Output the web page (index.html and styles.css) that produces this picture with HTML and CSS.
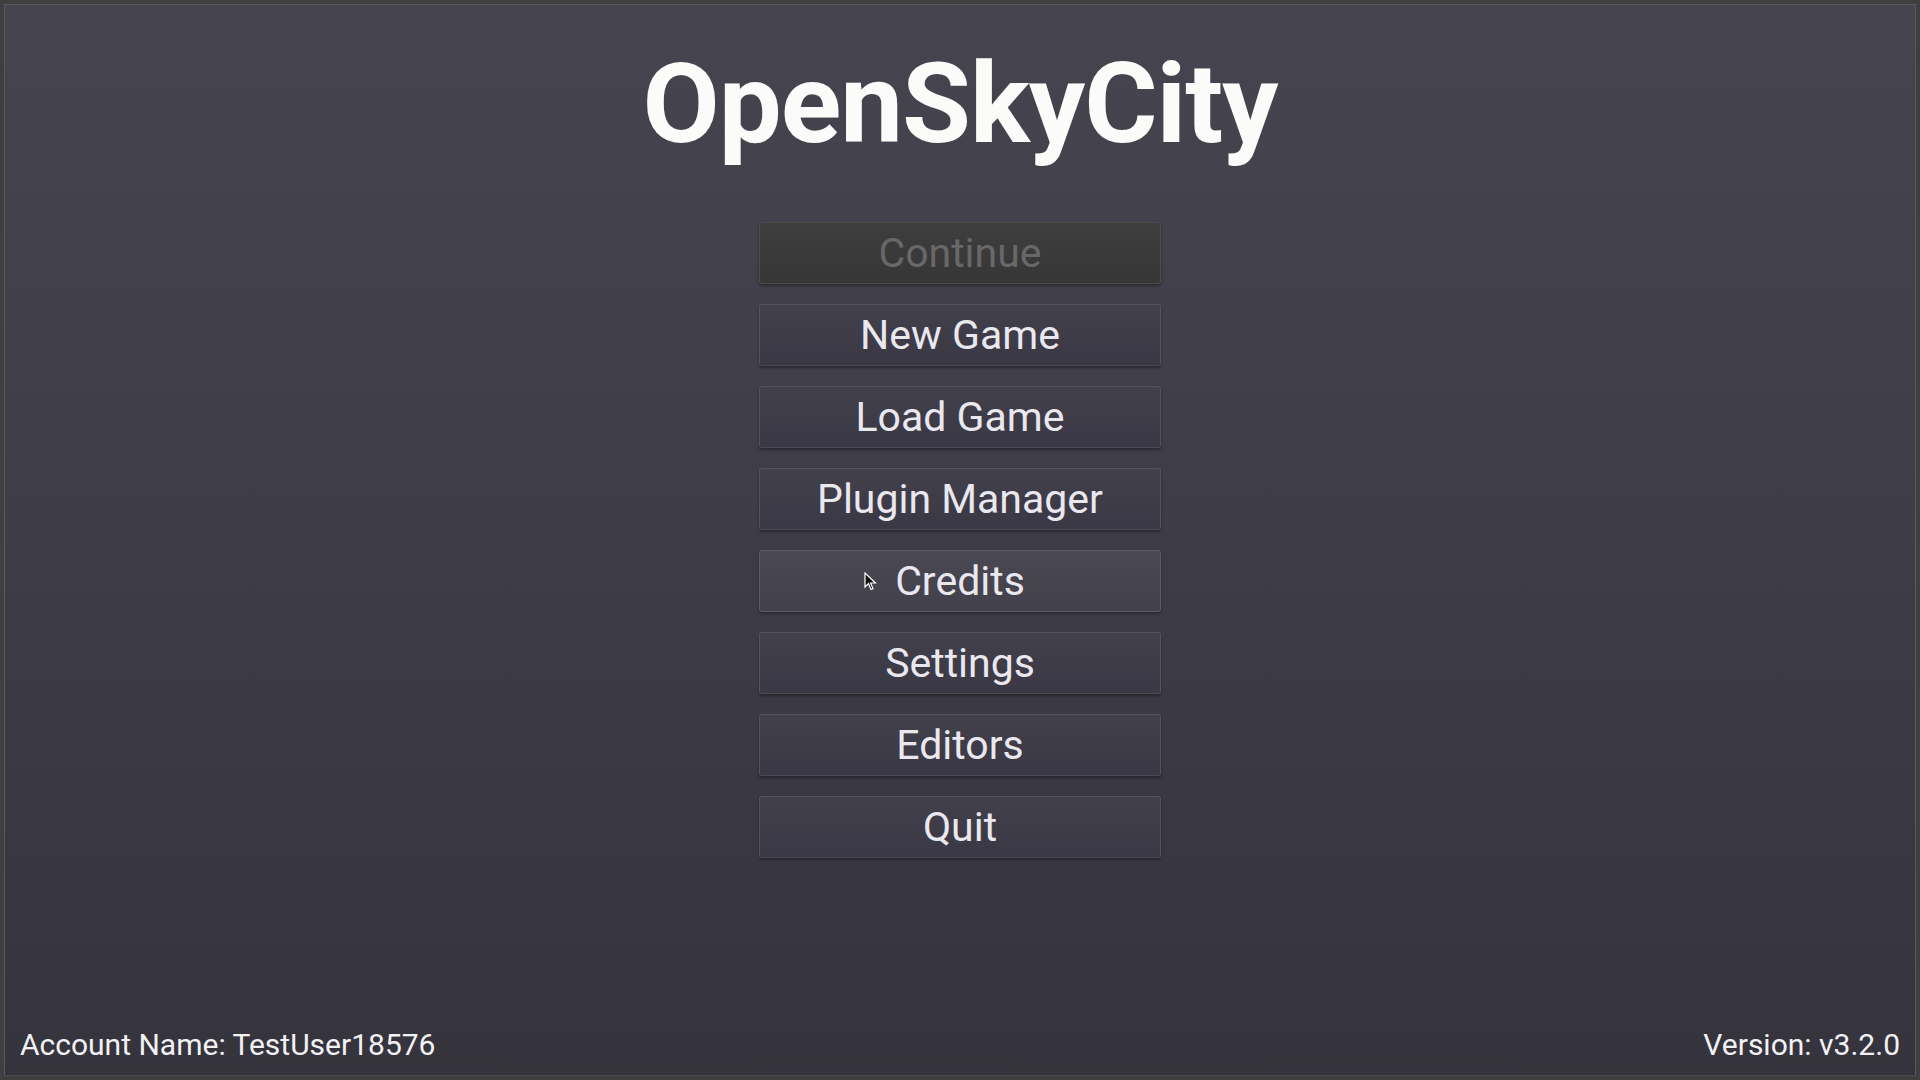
FILE: index.html
```html
<!DOCTYPE html>
<html>
<head>
    <title>OpenSkyCity</title>
    <link rel="stylesheet" href="styles.css">
</head>
<body>
    <div class="screen">
        <h1 class="title">OpenSkyCity</h1>

        <div class="menu">
            <button class="menu-btn disabled">Continue</button>
            <button class="menu-btn">New Game</button>
            <button class="menu-btn">Load Game</button>
            <button class="menu-btn">Plugin Manager</button>
            <button class="menu-btn hover">Credits
                <svg class="cursor" width="13" height="19" viewBox="0 0 13 19">
                    <path d="M1 1 L1 15 L4.5 11.5 L7 17.5 L9 16.6 L6.6 11 L11.5 11 Z" fill="#111" stroke="#fff" stroke-width="1.2"/>
                </svg>
            </button>
            <button class="menu-btn">Settings</button>
            <button class="menu-btn">Editors</button>
            <button class="menu-btn">Quit</button>
        </div>

        <div class="footer">
            <span>Account Name: TestUser18576</span>
            <span>Version: v3.2.0</span>
        </div>
    </div>
</body>
</html>
```

FILE: styles.css
```css
html, body {
    margin: 0;
    height: 100%;
    background: #3f3f3f;
}

body {
    font-family: Roboto, 'Liberation Sans', sans-serif;
    box-sizing: border-box;
    padding: 4px;
}

.screen {
    height: 100%;
    box-sizing: border-box;
    border: 1px solid #5a5960;
    border-bottom-color: #4a4950;
    background: linear-gradient(to bottom, #46444f 0%, #3e3c47 50%, #35333c 100%);
    display: flex;
    flex-direction: column;
    align-items: center;
}

.title {
    margin: 43px 0 0;
    font-size: 112px;
    line-height: 1;
    font-weight: 700;
    color: #fbfbf9;
    letter-spacing: -1px;
}

.menu {
    margin-top: 62px;
    display: flex;
    flex-direction: column;
    gap: 20px;
}

.menu-btn {
    position: relative;
    width: 402px;
    height: 62px;
    padding: 0;
    border: 1px solid #55535e;
    border-bottom-color: #4a4853;
    border-radius: 3px;
    background: linear-gradient(to bottom, #42404b, #3a3844);
    box-shadow: 0 2px 3px rgba(0, 0, 0, 0.35);
    color: #eae8ef;
    font-family: Roboto, 'Liberation Sans', sans-serif;
    font-size: 41px;
    line-height: 1;
}

.menu-btn.hover {
    background: linear-gradient(to bottom, #4a4853, #42404b);
    border-color: #5c5a65;
}

.menu-btn.disabled {
    background: linear-gradient(to bottom, #3e3e3e, #363636);
    border-color: #4c4c4c;
    color: #686868;
}

.cursor {
    position: absolute;
    left: 104px;
    top: 21px;
}

.footer {
    margin-top: auto;
    align-self: stretch;
    display: flex;
    justify-content: space-between;
    padding: 0 15px 15px;
    font-size: 30px;
    line-height: 1;
    color: #f2f1f4;
}
```
